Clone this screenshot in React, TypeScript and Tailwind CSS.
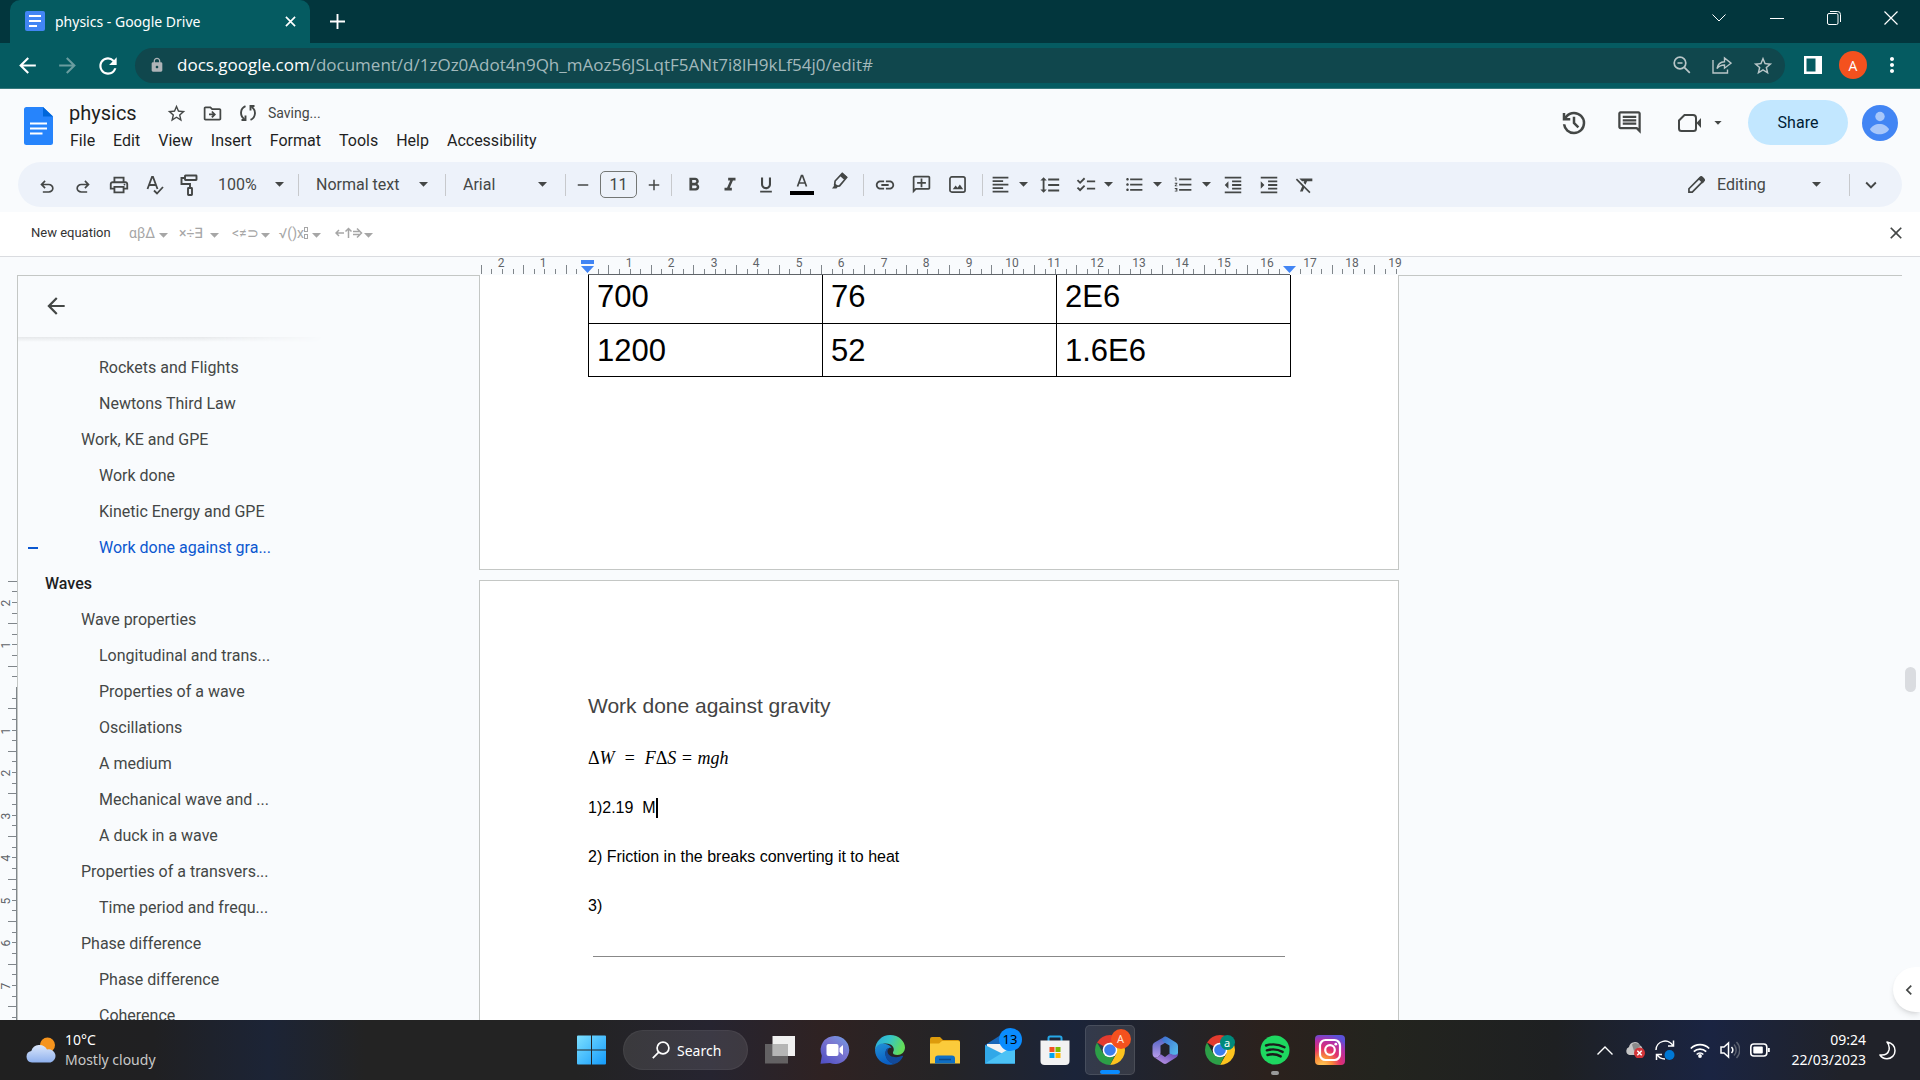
import React from 'react';
import {
  MdArrowBack, MdArrowForward, MdRefresh, MdLock, MdStarBorder, MdMoreVert, MdClose, MdOutlineDriveFileMove,
  MdOutlineComment, MdOutlinePrint, MdSpellcheck, MdFormatBold, MdFormatItalic, MdFormatUnderlined, MdLink,
  MdOutlineAddComment, MdFormatAlignLeft, MdFormatLineSpacing, MdChecklist, MdFormatListBulleted,
  MdFormatListNumbered, MdFormatIndentDecrease, MdFormatIndentIncrease, MdFormatClear, MdExpandMore,
  MdAdd, MdRemove, MdChevronLeft,
} from 'react-icons/md';

type IconProps = { className?: string };

function Caret({ className = '' }: IconProps) {
  return (
    <svg viewBox="0 0 9 5" className={`h-[5px] w-[9px] shrink-0 fill-current ${className}`} aria-hidden="true">
      <path d="M0 0h9L4.500 4.800z" />
    </svg>
  );
}

/* ---------- Browser window ---------- */

function TabStrip() {
  return (
    <div className="flex h-[43px] items-end bg-[#02363d] text-white [font-family:'Noto_Sans',sans-serif]">
      <div className="ml-[10px] flex h-full w-[300px] items-center rounded-t-[10px] bg-[#055b61] pr-[12px] pb-px pl-[15px]">
        <svg viewBox="0 0 20 20" className="size-5 shrink-0" aria-hidden="true">
          <rect width="20" height="20" rx="2" fill="#4285f4" />
          <path d="M4 5h12M4 10h12M4 15h8" stroke="#fff" strokeWidth="2.200" />
        </svg>
        <span className="ml-[10px] flex-1 text-[14px]">physics - Google Drive</span>
        <button aria-label="Close tab" className="grid size-4 place-items-center">
          <svg viewBox="0 0 12 12" className="size-[11px]"><path d="M1 1l10 10M11 1L1 11" stroke="#fff" strokeWidth="1.800" /></svg>
        </button>
      </div>
      <button aria-label="New tab" className="ml-[17px] grid h-full w-5 place-items-center">
        <svg viewBox="0 0 16 16" className="size-[15px]"><path d="M8 0v16M0 8h16" stroke="#fff" strokeWidth="2" /></svg>
      </button>
      <div className="ml-auto flex h-9 items-center self-start">
        <button aria-label="Search tabs" className="grid h-full w-[58px] place-items-center">
          <svg viewBox="0 0 14 8" className="w-[14px] fill-none stroke-white"><path d="M.5.5L7 7l6.500-6.500" /></svg>
        </button>
        <button aria-label="Minimise" className="grid h-full w-[57px] place-items-center">
          <svg viewBox="0 0 14 14" className="w-[14px] fill-none stroke-white"><path d="M0 7.500h14" /></svg>
        </button>
        <button aria-label="Restore" className="grid h-full w-[57px] place-items-center">
          <svg viewBox="0 0 14 14" className="w-[14px] fill-none stroke-white"><rect x=".5" y="2.500" width="10.500" height="11" rx="1.500" /><path d="M3 .5h7.500a3 3 0 0 1 3 3V11" /></svg>
        </button>
        <button aria-label="Close window" className="grid h-full w-[58px] place-items-center">
          <svg viewBox="0 0 14 14" className="w-[14px] fill-none stroke-white" strokeWidth="1.200"><path d="M.5.5l13 13M13.500.5l-13 13" /></svg>
        </button>
      </div>
    </div>
  );
}

function AddressBar() {
  return (
    <div className="flex h-[46px] items-center border-b border-[#37797d] bg-[#055b61] pt-px pb-[2px] text-white">
      <button aria-label="Back" className="ml-[15px] grid size-6 place-items-center"><MdArrowBack className="size-[25px]" /></button>
      <button aria-label="Forward" className="ml-[16px] grid size-6 place-items-center"><MdArrowForward className="size-[25px] text-[#6a9da0]" /></button>
      <button aria-label="Reload" className="ml-[16px] grid size-6 place-items-center"><MdRefresh className="size-[26px]" /></button>
      <div className="ml-4 flex h-[35px] flex-1 items-center rounded-full bg-[#10474d] pr-[13px] pl-[14px] text-[#b9c6c8]">
        <MdLock className="size-4 shrink-0 text-[#aeb4b8]" />
        <div role="textbox" aria-label="Address and search bar" contentEditable suppressContentEditableWarning className="ml-3 flex-1 truncate text-[17px] leading-6 text-[#a3b9bc] outline-none">
          <span className="text-white">docs.google.com</span>/document/d/1zOz0Adot4n9Qh_mAoz56JSLqtF5ANt7i8lH9kLf54j0/edit#
        </div>
        <div className="flex items-center gap-[20px]">
          <button aria-label="Zoom" className="grid size-5 place-items-center">
            <svg viewBox="0 0 18 18" className="size-[18px] fill-none stroke-current" strokeWidth="1.700"><circle cx="7" cy="7" r="5.800" /><path d="M4.500 7h5M11.300 11.300l5.500 5.500" /></svg>
          </button>
          <button aria-label="Share this page" className="grid size-5 place-items-center">
            <svg viewBox="0 0 20 18" className="h-[18px] w-5 fill-none stroke-current" strokeWidth="1.400"><path d="M1 4v13h14.500v-3.500M5 12.500c.7-4 3-6.500 7.500-6.700V2L19 7.200l-6.500 5V9c-3.500 0-5.500 1-7.500 3.500z" /></svg>
          </button>
          <button aria-label="Bookmark this tab" className="grid size-5 place-items-center"><MdStarBorder className="size-[22px]" /></button>
        </div>
      </div>
      <button aria-label="Side panel" className="ml-[18px] grid size-[19px] place-items-center">
        <svg viewBox="0 0 18 18" className="size-[18px]"><path d="M0 0h18v18H0zM2.500 2.500v13h9v-13z" fill="#fff" fillRule="evenodd" /></svg>
      </button>
      <button aria-label="Profile" className="ml-[17px] grid size-7 place-items-center rounded-full bg-[#f4511e] text-[14px]">A</button>
      <button aria-label="Browser menu" className="mr-4 ml-[13px] grid size-6 place-items-center"><MdMoreVert className="size-6" /></button>
    </div>
  );
}

/* ---------- Document header ---------- */

const menus = ['File', 'Edit', 'View', 'Insert', 'Format', 'Tools', 'Help', 'Accessibility'];

function DocHeader() {
  return (
    <header className="flex h-[73px] bg-[#f9fbfd] text-[#444746]">
      <svg viewBox="0 0 29 38" className="mt-[18px] ml-[24px] h-[38px] w-[29px] shrink-0" aria-hidden="true">
        <path d="M2.500 0H19l10 9.500v26a2.500 2.500 0 0 1-2.500 2.500h-24A2.500 2.500 0 0 1 0 35.500v-33A2.500 2.500 0 0 1 2.500 0z" fill="#2684fc" />
        <path d="M19 0l10 9.500H19z" fill="#0066da" />
        <path d="M6 16.500h17M6 21.500h17M6 26.500h12.500" stroke="#fff" strokeWidth="2.200" />
      </svg>
      <div className="ml-4 flex-1 pt-[10px]">
        <div className="flex h-7 items-center">
          <input aria-label="Document name" defaultValue="physics" className="w-[86px] bg-transparent text-[20px] text-[#1f1f1f] outline-none" />
          <button aria-label="Star" className="ml-[11px]"><MdStarBorder className="size-[21px]" /></button>
          <button aria-label="Move" className="ml-[15px]"><MdOutlineDriveFileMove className="size-[21px]" /></button>
          <svg viewBox="0 0 16 18" className="ml-[17px] h-[18px] w-4 fill-none stroke-current" strokeWidth="1.900" aria-hidden="true">
            <path d="M5.500 2.200A7.200 7.200 0 0 0 4.500 15M10.500 15.800A7.200 7.200 0 0 0 11.500 3" />
            <path d="M1.500 16h4v-4.500M14.500 2h-4v4.500" />
          </svg>
          <span className="ml-3 text-[14px]">Saving...</span>
        </div>
        <nav className="flex h-7 items-center gap-[18px] pl-px text-[16px] text-[#1f1f1f]">
          {menus.map((m) => <button key={m}>{m}</button>)}
        </nav>
      </div>
      <div className="mt-[11px] mr-[22px] flex h-[45px] items-center">
        <button aria-label="Version history">
          <svg viewBox="0 0 24 24" className="size-[30px] fill-current"><path d="M12 21q-3.450 0-6.013-2.287T3.050 13H5.100q.35 2.600 2.313 4.300T12 19q2.925 0 4.963-2.037T19 12q0-2.925-2.037-4.962T12 5q-1.725 0-3.225.8T6.250 8H9v2H3V4h2v2.350q1.275-1.600 3.113-2.475T12 3q1.875 0 3.513.713t2.850 1.924q1.212 1.213 1.925 2.850T21 12q0 1.875-.712 3.513t-1.925 2.850q-1.213 1.212-2.850 1.925T12 21Zm2.800-4.800L11 12.400V7h2v4.600l3.200 3.200Z" /></svg>
        </button>
        <button aria-label="Comments" className="ml-[27px]"><MdOutlineComment className="size-[27px]" /></button>
        <button aria-label="Start a call" className="ml-[35px] flex items-center gap-3">
          <svg viewBox="0 0 24 20" className="h-5 w-6 fill-none stroke-current" strokeWidth="2">
            <path d="M6.500 2H15a3 3 0 0 1 3 3v10.500a2.500 2.500 0 0 1-2.500 2.500h-12A2.500 2.500 0 0 1 1 15.500V7.500z" /><path d="M18.500 10L23 5v10z" fill="currentColor" stroke="none" />
          </svg>
          <Caret className="!h-1 !w-2" />
        </button>
        <button className="ml-[26px] h-[45px] w-[100px] rounded-full bg-[#c2e7ff] text-[16px] text-[#001d35]">Share</button>
        <button aria-label="Account" className="ml-[14px]">
          <svg viewBox="0 0 36 36" className="size-9"><circle cx="18" cy="18" r="18" fill="#4285f4" /><g fill="#a8c7fa"><circle cx="18" cy="11.500" r="4.700" /><path d="M8 24.500C9.500 21 13.500 19 17.500 19s8 2 9.500 5.500c-1.500 3-5.500 4.800-9.500 4.800S9.500 27.500 8 24.500z" /></g></svg>
        </button>
      </div>
    </header>
  );
}

/* ---------- Toolbars ---------- */

const cell = 'grid h-8 w-9 shrink-0 place-items-center';

function Tool({ label, children }: { label: string; children: React.ReactNode }) {
  return <button aria-label={label} className={cell}>{children}</button>;
}

function MenuTool({ label, children }: { label: string; children: React.ReactNode }) {
  return (
    <button aria-label={label} className="flex h-8 w-[49px] shrink-0 items-center justify-between pr-1 pl-[7px]">
      {children}
      <Caret />
    </button>
  );
}

function Drop({ label, value, className, caret }: { label: string; value: string; className: string; caret: string }) {
  return (
    <label className={`relative flex h-8 shrink-0 items-center ${className}`}>
      <select aria-label={label} className="w-full appearance-none bg-transparent outline-none"><option>{value}</option></select>
      <span className={`pointer-events-none absolute ${caret}`}><Caret /></span>
    </label>
  );
}

const Sep = () => <span className="h-[22px] w-px shrink-0 bg-[#c7c9cc]" />;

function Toolbar() {
  return (
    <div className="bg-[#f9fbfd] pr-[18px] pb-[5px] pl-[18px]">
      <div className="flex h-[45px] items-center rounded-full bg-[#edf2fa] pl-[11px] text-[16px] text-[#444746]">
        <Tool label="Undo"><svg viewBox="0 0 24 24" className="mt-1 size-5 fill-current"><path d="M7 19v-2h7.100q1.575 0 2.737-1Q18 15 18 13.500T16.837 11Q15.675 10 14.100 10H7.800l2.600 2.600L9 14 4 9l5-5 1.400 1.400L7.800 8h6.300q2.425 0 4.163 1.575Q20 11.150 20 13.500q0 2.350-1.737 3.925Q16.525 19 14.100 19Z" /></svg></Tool>
        <Tool label="Redo"><svg viewBox="0 0 24 24" className="mt-1 size-5 -scale-x-100 fill-current"><path d="M7 19v-2h7.100q1.575 0 2.737-1Q18 15 18 13.500T16.837 11Q15.675 10 14.100 10H7.800l2.600 2.600L9 14 4 9l5-5 1.400 1.400L7.800 8h6.300q2.425 0 4.163 1.575Q20 11.150 20 13.500q0 2.350-1.737 3.925Q16.525 19 14.100 19Z" /></svg></Tool>
        <Tool label="Print"><MdOutlinePrint className="size-[22px]" /></Tool>
        <Tool label="Spelling and grammar">
          <svg viewBox="0 0 18 20" className="h-5 w-[18px] fill-none stroke-current" strokeWidth="1.800"><path d="M1.500 14L6 2h1l4.500 12M3 10h7M8 15.500l3 3L17 12" /></svg>
        </Tool>
        <Tool label="Paint format">
          <svg viewBox="0 0 18 22" className="mr-1 h-[22px] w-[18px] fill-none stroke-current" strokeWidth="1.900"><rect x="5" y="1.500" width="11.500" height="4.500" rx=".5" /><path d="M5 4H1.500v6H10v4" /><rect x="8" y="14" width="4" height="7" rx=".5" /></svg>
        </Tool>
        <Drop label="Zoom" value="100%" className="w-[89px] pl-[9px]" caret="right-[14px]" />
        <Sep />
        <Drop label="Styles" value="Normal text" className="w-[146px] pl-[17px]" caret="right-[17px]" />
        <Sep />
        <Drop label="Font" value="Arial" className="w-[119px] pl-[17px]" caret="right-[18px]" />
        <Sep />
        <button aria-label="Decrease font size" className="grid h-8 w-[34px] shrink-0 place-items-center"><MdRemove className="size-[18px]" /></button>
        <input aria-label="Font size" defaultValue="11" className="h-[27px] w-[37px] shrink-0 rounded-[5px] border border-[#747775] bg-transparent text-center outline-none" />
        <button aria-label="Increase font size" className="grid h-8 w-[34px] shrink-0 place-items-center"><MdAdd className="size-[18px]" /></button>
        <Sep />
        <div className="mr-[7px] ml-1 flex">
          <Tool label="Bold"><MdFormatBold className="size-[22px]" /></Tool>
          <Tool label="Italic"><MdFormatItalic className="size-[22px]" /></Tool>
          <Tool label="Underline"><MdFormatUnderlined className="size-5" /></Tool>
          <Tool label="Text colour"><svg viewBox="0 0 24 24" className="size-6"><path d="M7.500 13.500L11.500 2.500h1L16.500 13.500M8.700 10h6.600" fill="none" stroke="#444746" strokeWidth="1.700" /><path d="M0 18h24v4H0z" /></svg></Tool>
          <Tool label="Highlight colour"><svg viewBox="0 0 18 20" className="mb-2 ml-1 h-[18px] w-4"><path d="M11.500 1.500l5 4.500-8 9.500-4 .5-1.500-1.500L3.500 10z" fill="none" stroke="#444746" strokeWidth="1.900" /><path d="M9 4.500l5 4.500 3-3.500L11.800 1zM4 13l3 3-2 2.500H0z" fill="#444746" /></svg></Tool>
        </div>
        <Sep />
        <div className="mr-[7px] ml-[3px] flex">
          <Tool label="Insert link"><MdLink className="size-[22px]" /></Tool>
          <Tool label="Add comment"><MdOutlineAddComment className="size-[21px] -scale-x-100" /></Tool>
          <Tool label="Insert image"><svg viewBox="0 0 18 18" className="size-[17px] fill-none stroke-current" strokeWidth="1.800"><rect x="1" y="1" width="16" height="16" rx="2" /><path d="M4 14l3-4 2 2.500 2.500-3.500L15 14z" fill="currentColor" stroke="none" /></svg></Tool>
        </div>
        <Sep />
        <MenuTool label="Align"><MdFormatAlignLeft className="size-[21px]" /></MenuTool>
        <Tool label="Line spacing"><MdFormatLineSpacing className="size-[22px]" /></Tool>
        <MenuTool label="Checklist"><MdChecklist className="size-[22px]" /></MenuTool>
        <MenuTool label="Bulleted list"><MdFormatListBulleted className="size-[21px]" /></MenuTool>
        <MenuTool label="Numbered list"><MdFormatListNumbered className="size-[21px]" /></MenuTool>
        <Tool label="Decrease indent"><MdFormatIndentDecrease className="size-[22px]" /></Tool>
        <Tool label="Increase indent"><MdFormatIndentIncrease className="size-[22px]" /></Tool>
        <Tool label="Clear formatting"><MdFormatClear className="size-[22px]" /></Tool>
        <button className="ml-auto flex h-8 w-[161px] items-center">
          <svg viewBox="0 0 18 18" className="mr-3 size-[17px] fill-none stroke-current" strokeWidth="1.800"><path d="M1 17v-3.500L13 1.500c.6-.6 1.300-.6 2 0l1.500 1.500c.6.600.6 1.300 0 2l-12 12z" /><path d="M12 3l3.500 3.500 1.500-2-3-3z" fill="currentColor" /></svg>
          Editing
          <Caret className="mr-[28px] ml-auto" />
        </button>
        <Sep />
        <button aria-label="Hide menus" className="mr-[10px] grid h-8 w-[42px] shrink-0 place-items-center"><MdExpandMore className="size-[22px]" /></button>
      </div>
    </div>
  );
}

function EquationBar() {
  return (
    <div className="flex h-[45px] items-center border-b border-[#dadce0] bg-white pr-[14px] pb-[2px] pl-[31px] text-[#a6a6a6]">
      <button className="w-[98px] text-left text-[13px] text-[#333]">New equation</button>
      <button aria-label="Greek letters" className="flex w-[50px] items-center gap-1 text-[14px]">αβΔ<Caret className="mt-1" /></button>
      <button aria-label="Miscellaneous operations" className="flex w-[53px] items-center gap-[7px] text-[14px]">×÷∃<Caret className="mt-1" /></button>
      <button aria-label="Relations" className="flex w-[47px] items-center gap-[2px] text-[14px]">&lt;≠⊃<Caret className="mt-1" /></button>
      <button aria-label="Maths operators" className="flex w-[56px] items-center text-[14px]">
        √()x
        <svg viewBox="0 0 4 13" className="mr-1 h-[13px] w-1 fill-none stroke-current"><rect x=".5" y=".5" width="3" height="4" /><rect x=".5" y="7.500" width="3" height="4" /></svg>
        <Caret className="mt-1" />
      </button>
      <button aria-label="Arrows" className="flex items-center gap-px">
        <svg viewBox="0 0 28 12" className="h-3 w-7 fill-none stroke-current" strokeWidth="1.500"><path d="M9 6H1M4 3L1 6l3 3M13.500 11V1.500M10.500 4.500l3-3 3 3M18 4.500h7M18 7.500h7M22 1.500L26.500 6 22 10.500" /></svg>
        <Caret className="mt-1" />
      </button>
      <button aria-label="Close equation toolbar" className="ml-auto text-[#444746]"><MdClose className="size-[20px]" /></button>
    </div>
  );
}

/* ---------- Rulers ---------- */

const CM = 42.56;
const quarters = (from: number, to: number) =>
  Array.from({ length: (to - from) * 4 + 1 }, (_, i) => from + i / 4);

function HorizontalRuler() {
  const zero = 108;
  return (
    <svg className="h-[18px] w-full overflow-visible text-[12px]" aria-label="Ruler">
      {quarters(-2.5, 19).filter((q) => q !== 0 && q !== 16.5).map((q) => {
        const x = Math.round(zero + q * CM);
        const whole = q % 1 === 0;
        return (
          <g key={q}>
            <path d={`M${x + 0.5} ${Math.abs(q % 1) === 0.5 ? 8 : 12}V17`} stroke="#80868b" />
            {whole && <text x={x - 1} y="10" textAnchor="middle" fill="#5f6368">{Math.abs(q)}</text>}
          </g>
        );
      })}
      <path d="M109 17.500h702" stroke="#5f6368" />
      <path d="M102 3h13v4h-13zM102 9h13l-6.500 7z" fill="#4285f4" />
      <path d="M804 9h13l-6.500 7z" fill="#4285f4" />
    </svg>
  );
}

function VerticalRuler() {
  const zero = 412;
  return (
    <svg className="h-full w-[17px] shrink-0 text-[12px]" aria-label="Vertical ruler">
      {quarters(-2.5, 7.75).filter((q) => q !== 0).map((q) => {
        const y = Math.round(zero + q * CM);
        return (
          <g key={q}>
            <path d={`M${Math.abs(q % 1) === 0.5 ? 8 : 12} ${y + 0.5}H17`} stroke="#80868b" />
            {q % 1 === 0 && <text transform={`translate(10 ${y + 1}) rotate(-90)`} textAnchor="middle" fill="#5f6368">{Math.abs(q)}</text>}
          </g>
        );
      })}
      <path d="M16.500 412V900" stroke="#80868b" />
    </svg>
  );
}

/* ---------- Document ---------- */

type Entry = { text: string; level: 1 | 2 | 3; active?: boolean };
const outline: Entry[] = [
  { text: 'Rockets and Flights', level: 3 },
  { text: 'Newtons Third Law', level: 3 },
  { text: 'Work, KE and GPE', level: 2 },
  { text: 'Work done', level: 3 },
  { text: 'Kinetic Energy and GPE', level: 3 },
  { text: 'Work done against gra...', level: 3, active: true },
  { text: 'Waves', level: 1 },
  { text: 'Wave properties', level: 2 },
  { text: 'Longitudinal and trans...', level: 3 },
  { text: 'Properties of a wave', level: 3 },
  { text: 'Oscillations', level: 3 },
  { text: 'A medium', level: 3 },
  { text: 'Mechanical wave and ...', level: 3 },
  { text: 'A duck in a wave', level: 3 },
  { text: 'Properties of a transvers...', level: 2 },
  { text: 'Time period and frequ...', level: 3 },
  { text: 'Phase difference', level: 2 },
  { text: 'Phase difference', level: 3 },
  { text: 'Coherence', level: 3 },
];
const indent = {
  1: 'pl-[27px] font-medium text-[#1f1f1f]',
  2: 'pl-[63px] text-[#444746]',
  3: 'pl-[81px] text-[#444746]',
};

function Outline() {
  return (
    <aside className="flex min-w-0 flex-1 flex-col border-l border-[#c4c7c5]">
      <div className="flex h-[62px] shrink-0 items-center pl-[25px] text-[#444746]">
        <button aria-label="Close outline"><MdArrowBack className="size-[26px]" /></button>
      </div>
      <div className="h-[5px] w-[306px] shrink-0 bg-linear-to-b from-[#e6e8ea] to-[#f9fbfd] mask-r-from-60%" />
      <nav className="pt-2 text-[16px]">
        {outline.map((o, i) => (
          <a key={i} href={`#section-${i}`} className={`relative flex h-9 items-center whitespace-nowrap ${indent[o.level]}`}>
            {o.active && <span className="absolute left-[10px] h-[2px] w-[10px] bg-[#0b57d0]" />}
            <span className={o.active ? 'text-[#0b57d0]' : ''}>{o.text}</span>
          </a>
        ))}
      </nav>
    </aside>
  );
}

const rows = [['700', '76', '2E6'], ['1200', '52', '1.6E6']];

function Pages() {
  return (
    <main className="flex min-h-0 flex-col gap-[10px] text-black [font-family:'Liberation_Sans',Arial,sans-serif]">
      <section className="h-[295px] shrink-0 border-x border-b border-[#c4c7c5] bg-white px-[108px]">
        <table className="w-[703px] table-fixed border-collapse text-[31px] leading-9">
          <tbody>
            {rows.map((r, i) => (
              <tr key={i} className={i === 0 ? 'h-12' : 'h-[53px]'}>
                {r.map((c) => (
                  <td key={c} className={`border-x border-b border-black pl-[8px] align-top ${i === 0 ? 'pt-1' : 'pt-[9px]'}`}>{c}</td>
                ))}
              </tr>
            ))}
          </tbody>
        </table>
      </section>
      <section className="flex-1 border-x border-t border-[#c4c7c5] bg-white px-[108px] pt-[111px]">
        <h3 className="text-[21px] leading-7 text-[#434343]">Work done against gravity</h3>
        <div className="mt-[26px] flex flex-col gap-6 text-[16px] leading-[25px]">
          <p className="text-[18px] whitespace-pre italic [font-family:'Liberation_Serif',serif]">
            <span className="not-italic">Δ</span>W  =  F<span className="not-italic">Δ</span>S = mgh
          </p>
          <p className="flex items-center whitespace-pre">1)2.19  M<span className="h-5 w-[2px] bg-black" /></p>
          <p>2) Friction in the breaks converting it to heat</p>
          <p>3)</p>
        </div>
        <hr className="mx-[5px] mt-[38px] border-[#888]" />
      </section>
    </main>
  );
}

/* ---------- Taskbar ---------- */

function Chrome() {
  return (
    <>
      <path d="M15 15L2.010 7.500A15 15 0 0 1 27.990 7.500z" fill="#e33b2e" />
      <path d="M27.990 7.500A15 15 0 0 1 15 30L21.500 18.500 15 7.500z" fill="#fcc31e" />
      <path d="M15 30A15 15 0 0 1 2.010 7.500L8.500 18.800 15 22.500l4.500-1.500z" fill="#2c9f47" />
      <circle cx="15" cy="15" r="7.300" fill="#fff" />
      <circle cx="15" cy="15" r="5.800" fill="#3b7ded" />
    </>
  );
}

function AppButton({ label, active, children }: { label: string; active?: boolean; children: React.ReactNode }) {
  return (
    <button aria-label={label} className="grid h-full w-[55px] shrink-0 place-items-center">
      <span className={`relative grid size-[50px] place-items-center rounded-[5px] ${active ? 'border border-white/10 bg-white/10' : ''}`}>{children}</span>
    </button>
  );
}

const glyph = 'size-[30px] overflow-visible';

function Apps() {
  return (
    <div className="flex h-full items-center pl-px">
      <AppButton label="Start">
        <svg viewBox="0 0 30 30" className={glyph}>
          <defs><linearGradient id="win" x1="0" y1="0" x2="1" y2="1" gradientUnits="objectBoundingBox"><stop stopColor="#7de0ff" /><stop offset="1" stopColor="#149bfb" /></linearGradient></defs>
          <path d="M0 1.500A1 1 0 0 1 1 .5h13v14H0zM15 .5h13a1 1 0 0 1 1 1v13H15zM0 15.500h14v14H1a1 1 0 0 1-1-1zM15 15.500h14v13a1 1 0 0 1-1 1H15z" fill="url(#win)" />
        </svg>
      </AppButton>
      <button className="mx-1 flex h-10 w-[125px] items-center rounded-full border border-white/5 bg-white/10 pl-[28px] text-[14px] text-white">
        <svg viewBox="0 0 18 18" className="mr-[7px] size-[18px] fill-none stroke-white" strokeWidth="1.700"><circle cx="11" cy="7" r="5.900" /><path d="M6.800 11.200L.8 17.200" /></svg>
        Search
      </button>
      <AppButton label="Task view">
        <svg viewBox="0 0 30 30" className={glyph}><path d="M7.500 1H30v20H7.500z" fill="#f0f0f0" /><path d="M0 9h23v19.500H0z" fill="#777" fillOpacity=".75" /><path d="M7.500 9H23v12H7.500z" fill="#b5b5b5" /></svg>
      </AppButton>
      <AppButton label="Chat">
        <svg viewBox="0 0 30 30" className={glyph}>
          <defs><linearGradient id="chat" x1="1" y1="0" x2=".2" y2="1"><stop stopColor="#6f9fe6" /><stop offset=".45" stopColor="#7b77d0" /><stop offset="1" stopColor="#5352c4" /></linearGradient></defs>
          <path d="M15 1a14 14 0 1 1-5 27L.5 28.800l1.300-8A14 14 0 0 1 15 1z" fill="url(#chat)" />
          <rect x="6.500" y="9" width="12" height="12" rx="2" fill="#fff" /><path d="M19.500 13l3.500-3v10l-3.500-3z" fill="#fff" />
        </svg>
      </AppButton>
      <AppButton label="Edge">
        <svg viewBox="0 0 30 30" className={glyph}>
          <defs>
            <linearGradient id="edge1" x1="0" y1="0" x2="1" y2=".3"><stop stopColor="#2aa8dd" /><stop offset=".5" stopColor="#35c4c9" /><stop offset="1" stopColor="#63dd5a" /></linearGradient>
            <linearGradient id="edge2" x1="0" y1="0" x2=".3" y2="1"><stop stopColor="#2191d6" /><stop offset="1" stopColor="#0a5fc4" /></linearGradient>
          </defs>
          <path d="M0 15C.5 6 7 0 15 0c9 0 15 6.500 15 12.500 0 4.500-3.500 7.500-7.500 7.500-3.500 0-5-1.500-4.500-2.800 1.500-2 1-6-2.500-7.700C10 7 3.500 9 0 15z" fill="url(#edge1)" />
          <path d="M0 15c1.500-5.500 6.500-7 10-6.200 3.500.7 6 2.700 6.500 4.200-3-1-6 1.500-6 5.500 0 5 4 9.500 9.500 10.500C10 32 0 25 0 15z" fill="url(#edge2)" />
          <path d="M10.800 15.500C9 21 12 27.500 19.500 29c4-1 7-4 8.500-7.500.3-.8-.5-1-1-.7-5 2.700-14 1.500-14.500-4.300 0-1.500.8-2.700 2-3.500-2 0-3.200 1-3.700 2.500z" fill="#124a9b" />
        </svg>
      </AppButton>
      <AppButton label="File Explorer">
        <svg viewBox="0 0 30 30" className={glyph}>
          <path d="M0 4a2 2 0 0 1 2-2h8l3 3h15a2 2 0 0 1 2 2v3H0z" fill="#dd9b0c" /><path d="M0 8.500h9L12 6h16.500A1.500 1.500 0 0 1 30 7.500v21H0z" fill="#fbcb3b" />
          <path d="M5 28.500v-5a3 3 0 0 1 3-3h14a3 3 0 0 1 3 3v5z" fill="#0f6fc4" /><path d="M9 24.500h12" stroke="#0a4a8a" strokeWidth="1.500" />
        </svg>
      </AppButton>
      <AppButton label="Mail">
        <svg viewBox="0 0 30 30" className={glyph}>
          <path d="M0 10L15 .5 30 10v18.500H0z" fill="#1766b8" /><path d="M2 9h26v9l-13 5L2 18z" fill="#f2f2f2" />
          <path d="M0 10l19 9.500L30 28.500H0z" fill="#31a8e8" /><path d="M30 10L0 28.500h30z" fill="#4cc2f5" />
        </svg>
        <span className="absolute top-[3px] right-[3px] grid size-[23px] place-items-center rounded-full bg-[#0a8cff] text-[13px] text-black">13</span>
      </AppButton>
      <AppButton label="Microsoft Store">
        <svg viewBox="0 0 30 30" className={glyph}>
          <path d="M8.500 6V3A1.500 1.500 0 0 1 10 1.500h10A1.500 1.500 0 0 1 21.500 3v3" fill="none" stroke="#26a7e8" strokeWidth="2" /><path d="M.5 5.500h29V26a4 4 0 0 1-4 4h-21a4 4 0 0 1-4-4z" fill="#f2f2f2" />
          <path d="M9.500 12h5v5h-5z" fill="#f25022" /><path d="M15.500 12h5v5h-5z" fill="#7fba00" /><path d="M9.500 18h5v5h-5z" fill="#00a4ef" /><path d="M15.500 18h5v5h-5z" fill="#ffb900" />
        </svg>
      </AppButton>
      <AppButton label="Google Chrome" active>
        <svg viewBox="0 0 30 30" className={glyph}><Chrome /></svg>
        <span className="absolute top-[3px] right-[3px] grid size-5 place-items-center rounded-full bg-[#f4511e] text-[11px] text-[#ffe3da]">A</span>
        <span className="absolute bottom-0 h-1 w-5 rounded-full bg-[#0a8cff]" />
      </AppButton>
      <AppButton label="Microsoft 365">
        <svg viewBox="0 0 30 30" className={glyph}>
          <defs>
            <linearGradient id="m1" x1="0" y1="0" x2="0" y2="1"><stop stopColor="#4a5fc0" /><stop offset="1" stopColor="#b79bea" /></linearGradient>
            <linearGradient id="m2" x1="0" y1="0" x2="1" y2="1"><stop stopColor="#3d6fd0" /><stop offset="1" stopColor="#58c2ee" /></linearGradient>
            <linearGradient id="m3" x1="0" y1="1" x2="1" y2="0"><stop stopColor="#c59bea" /><stop offset="1" stopColor="#5d4bb5" /></linearGradient>
          </defs>
          <path d="M15 1.500L4.500 7.500A4 4 0 0 0 2.500 11v8a4 4 0 0 0 2 3.500c3.500.5 6-1.500 6-4.500v-7.500L19 5.500z" fill="url(#m1)" />
          <path d="M15 1.500l-1.500 1c-1.500 1-1.500 3.500 0 4.500l6 3.500v8l5.500 3.500 1.500-1a4 4 0 0 0 1.500-3V11a4 4 0 0 0-2-3.500L17 2a3 3 0 0 0-2-.5z" fill="url(#m2)" />
          <path d="M4.500 22.500L13.500 28.500a3 3 0 0 0 3 0l9.500-6c1.500-1 2-2.500 2-4-2 2-5 1.500-8.500 0L15 22l-4.500-3c-.5 2.500-3 4-6 3.500z" fill="url(#m3)" />
        </svg>
      </AppButton>
      <AppButton label="Google Chrome, second profile">
        <svg viewBox="0 0 30 30" className={glyph}><Chrome /></svg>
        <span className="absolute top-[10px] right-[10px] grid size-[15px] place-items-center rounded-full bg-[#00897b] text-[11px] leading-none text-white">a</span>
      </AppButton>
      <AppButton label="Spotify">
        <svg viewBox="0 0 30 30" className={glyph}><circle cx="15" cy="15" r="14.500" fill="#1ed760" /><path d="M6 10.500c6-1.800 13-1.200 18.500 1.800M6.800 15.300c5.500-1.500 11.200-1 15.800 1.600M7.500 20c4.700-1.200 9.300-.8 13.200 1.400" fill="none" stroke="#1b1b1b" strokeWidth="2.400" strokeLinecap="round" /></svg>
        <span className="absolute bottom-0 h-1 w-2 rounded-full bg-[#9a9a9a]" />
      </AppButton>
      <AppButton label="Instagram">
        <svg viewBox="0 0 30 30" className={glyph}>
          <defs>
            <radialGradient id="ig" cx=".25" cy="1.050" r="1.100"><stop stopColor="#ffd25a" /><stop offset=".3" stopColor="#fa8a3a" /><stop offset=".55" stopColor="#e2306c" /><stop offset=".8" stopColor="#b32fa8" /><stop offset="1" stopColor="#5b51d8" /></radialGradient>
          </defs>
          <rect width="30" height="30" rx="4" fill="url(#ig)" /><g fill="none" stroke="#fff" strokeWidth="2.200"><rect x="5" y="5" width="20" height="20" rx="5.500" /><circle cx="15" cy="15" r="4.800" /></g><circle cx="20.800" cy="9.200" r="1.400" fill="#fff" />
        </svg>
      </AppButton>
    </div>
  );
}

function Tray() {
  return (
    <div className="flex items-center justify-end pr-6 text-white">
      <svg viewBox="0 0 16 9" className="mr-3 w-4 fill-none stroke-current" strokeWidth="1.400"><path d="M.5 8.500L8 1l7.500 7.500" /></svg>
      <svg viewBox="0 0 20 16" className="mr-[10px] h-4 w-5"><path d="M4.500 13a4.200 4.200 0 0 1-.5-8A5.800 5.800 0 0 1 15 3.500c2 .5 2.500 2.500 2.500 4.500l-4 5z" fill="#c5c5c5" /><path d="M7 2.500A5.500 5.500 0 0 1 15.500 4L9 9z" fill="#8a8a8a" /><circle cx="14.500" cy="11" r="5.500" fill="#d13438" /><path d="M12.300 8.800l4.400 4.400M16.700 8.800l-4.400 4.400" stroke="#fff" strokeWidth="1.500" /></svg>
      <svg viewBox="0 0 20 20" className="mr-[15px] size-5 fill-none stroke-current" strokeWidth="1.500"><path d="M1 10a9 9 0 0 1 17-4M18.500.5V6H13M10 19a9 9 0 0 1-8-4.500M1.500 20v-5.500H7" /><circle cx="14.500" cy="15" r="5" fill="#0078d4" stroke="none" /></svg>
      <svg viewBox="0 0 20 15" className="mr-[10px] h-[15px] w-5 fill-none stroke-current" strokeWidth="1.700"><path d="M.8 5.500a13 13 0 0 1 18.400 0M3.800 8.700a8.800 8.800 0 0 1 12.400 0M6.700 11.500a4.700 4.700 0 0 1 6.600 0" /><circle cx="10" cy="13" r="1.900" fill="currentColor" stroke="none" /></svg>
      <svg viewBox="0 0 20 18" className="mr-[10px] h-[18px] w-5 fill-none stroke-current" strokeWidth="1.500"><path d="M1 6h3l4.500-4v14L4 12H1z" /><path d="M11.500 6a4.500 4.500 0 0 1 0 6" /><path d="M14 3.500a8 8 0 0 1 0 11M16.500 1a11.500 11.500 0 0 1 0 16" stroke="#5c6270" /></svg>
      <svg viewBox="0 0 20 14" className="mr-[22px] h-[14px] w-5 fill-none stroke-current" strokeWidth="1.600"><rect x=".8" y="1" width="16" height="12" rx="3" /><rect x="3.300" y="3.500" width="9.500" height="7" rx="1" fill="currentColor" stroke="none" /><path d="M18.800 5v4" strokeWidth="2" /></svg>
      <div className="mr-[13px] text-right text-[14px] leading-5"><div>09:24</div><div>22/03/2023</div></div>
      <svg viewBox="0 0 17 19" className="h-[19px] w-[17px] fill-none stroke-current" strokeWidth="1.500" strokeLinejoin="round"><path d="M8 1c5 1 8 4.500 8 8.700 0 4.500-3.500 8-8 8-3 0-5.500-1.200-7-3.700 4.500.5 8-1.200 9-5C10.600 6 10 3.300 8 1z" /></svg>
    </div>
  );
}

function Taskbar() {
  return (
    <footer className="grid h-[60px] shrink-0 grid-cols-[1fr_auto_1fr] items-center bg-[linear-gradient(90deg,#202020_0%,#202022_8%,#1c2436_14%,#232323_19%,#232323_30%,#262430_37%,#2f2222_43%,#252426_49%,#1b2439_56%,#252326_62%,#2b211d_66%,#23241e_72%,#1e2022_81%,#1a2442_89%,#202229_96%,#202229_100%)]">
      <div className="flex items-center pl-[26px] text-white">
        <svg viewBox="0 0 30 26" className="mr-[9px] h-[26px] w-[30px]" aria-hidden="true">
          <defs><linearGradient id="cl" x1="0" y1="0" x2="0" y2="1"><stop stopColor="#dbe7fb" /><stop offset="1" stopColor="#8fb1ee" /></linearGradient></defs>
          <circle cx="21.500" cy="8" r="7.500" fill="#f6941d" />
          <path d="M6 25.500A5.800 5.800 0 0 1 5.300 14 8.500 8.500 0 0 1 21 12.500a6.500 6.500 0 0 1 3.500 13z" fill="url(#cl)" />
        </svg>
        <div className="text-[14px] leading-5"><div>10°C</div><div className="text-[#c8c8c8]">Mostly cloudy</div></div>
      </div>
      <Apps />
      <Tray />
    </footer>
  );
}

export default function App() {
  return (
    <div className="flex h-screen flex-col overflow-hidden bg-[#f9fbfd] [font-family:Roboto,sans-serif]">
      <div className="[font-family:'Open_Sans',sans-serif]">
        <TabStrip />
        <AddressBar />
      </div>
      <DocHeader />
      <Toolbar />
      <EquationBar />
      <div className="relative flex min-h-0 flex-1 flex-col">
        <div className="grid h-[18px] shrink-0 grid-cols-[1fr_920px_1fr_42px]">
          <div className="ml-[17px] border-b border-[#c4c7c5]" />
          <div className="border-b border-[#c4c7c5]"><HorizontalRuler /></div>
          <div className="border-b border-[#c4c7c5]" />
          <div className="mr-[18px] border-b border-[#c4c7c5]" />
        </div>
        <div className="grid min-h-0 flex-1 grid-cols-[1fr_920px_1fr_42px] grid-rows-[minmax(0,1fr)] overflow-hidden">
          <div className="flex min-h-0"><VerticalRuler /><Outline /></div>
          <Pages />
        </div>
        <div className="absolute top-[410px] right-[4px] h-[25px] w-[11px] rounded-full bg-[#dadce0]" />
        <button aria-label="Show side panel" className="absolute right-0 bottom-[8px] grid h-[45px] w-[27px] place-items-center rounded-l-full bg-white pl-1 text-[#444746] shadow-md">
          <MdChevronLeft className="size-5" />
        </button>
      </div>
      <div className="[font-family:'Noto_Sans',sans-serif]"><Taskbar /></div>
    </div>
  );
}
